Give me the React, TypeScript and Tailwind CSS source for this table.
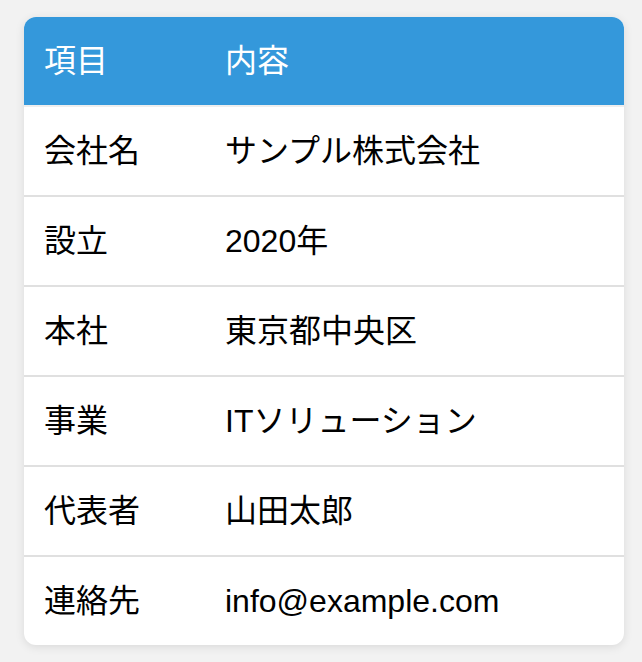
const rows: [string, string][] = [
  ["会社名", "サンプル株式会社"],
  ["設立", "2020年"],
  ["本社", "東京都中央区"],
  ["事業", "ITソリューション"],
  ["代表者", "山田太郎"],
  ["連絡先", "info@example.com"],
];

export default function App() {
  return (
    <div className="min-h-[662px] bg-[#f2f2f2] px-6 pt-[17px] font-['Liberation_Sans','Noto_Sans_CJK_JP',sans-serif]">
      <div className="w-[600px] overflow-hidden rounded-xl bg-white shadow-[0_2px_10px_rgba(0,0,0,0.1)]">
        <table className="w-full border-collapse text-[32px] leading-none">
          <thead>
            <tr className="h-[89px] border-b-2 border-[#eeeeee] bg-[#3498db] text-left text-white">
              <th className="w-[181px] px-5 font-normal">項目</th>
              <th className="px-5 font-normal">内容</th>
            </tr>
          </thead>
          <tbody>
            {rows.map(([label, value], i) => (
              <tr
                key={label}
                className={
                  i < rows.length - 1
                    ? "h-[90px] border-b-2 border-[#e0e0e0] text-black"
                    : "h-[89px] text-black"
                }
              >
                <td className="px-5">{label}</td>
                <td className="px-5">{value}</td>
              </tr>
            ))}
          </tbody>
        </table>
      </div>
    </div>
  );
}
